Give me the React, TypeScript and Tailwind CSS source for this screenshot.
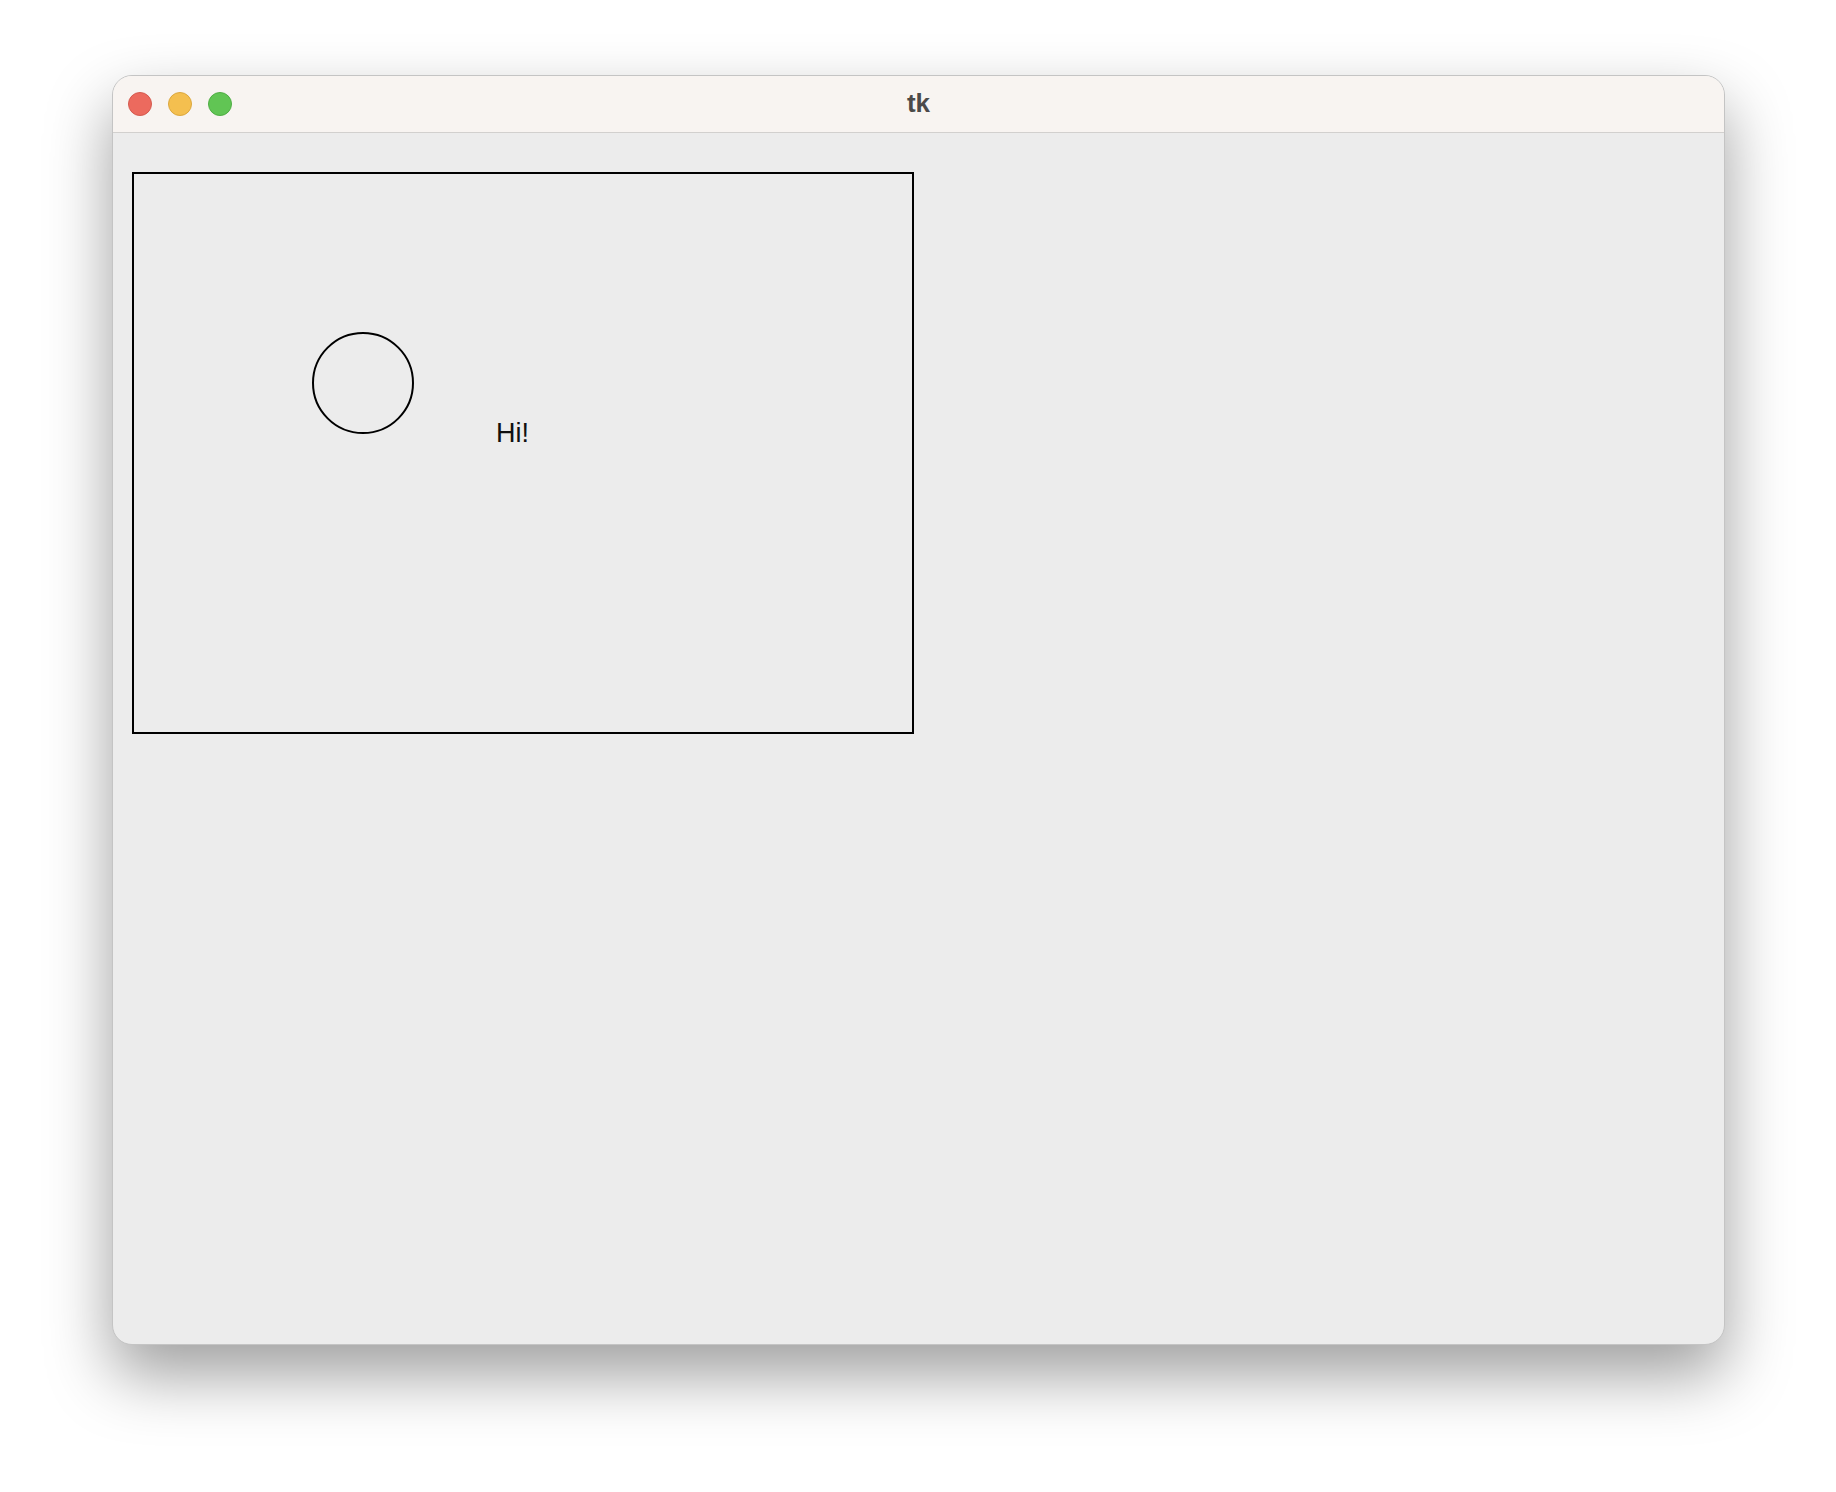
export default function App() {
  return (
    <div className="w-[1836px] h-[1492px] bg-white pl-[112px] pt-[75px]" style={{ fontFamily: '"Liberation Sans", Arial, sans-serif' }}>
      <div className="w-[1613px] h-[1270px] rounded-[20px] bg-[#ececec] overflow-hidden border border-[#c4c4c4] shadow-[0_30px_65px_rgba(0,0,0,0.38)] flex flex-col">
        {/* title bar */}
        <div className="h-[57px] shrink-0 bg-[#f8f4f1] border-b border-[#d2d0ce] grid grid-cols-[1fr_auto_1fr] items-center">
          <div className="flex items-center gap-4 pl-[15px]">
            <div className="w-6 h-6 rounded-full bg-[#ec6a5e] border border-[#d45a4f]" />
            <div className="w-6 h-6 rounded-full bg-[#f4bf4f] border border-[#dba73e]" />
            <div className="w-6 h-6 rounded-full bg-[#61c554] border border-[#4fad44]" />
          </div>
          <div className="text-[26px] font-bold text-[#4b4a49] leading-none pb-[2px]">tk</div>
          <div />
        </div>

        {/* content */}
        <div className="flex-1 pl-[19px] pt-[39px]">
          <div className="relative w-[782px] h-[562px] border-2 border-black">
            <svg className="absolute left-[178px] top-[158px]" width="102" height="102" viewBox="0 0 102 102">
              <circle cx="51" cy="51" r="50" fill="none" stroke="#000" strokeWidth="2" />
            </svg>
            <span className="absolute left-[362px] top-[246px] text-[27px] leading-none text-[#111]">Hi!</span>
          </div>
        </div>
      </div>
    </div>
  )
}
